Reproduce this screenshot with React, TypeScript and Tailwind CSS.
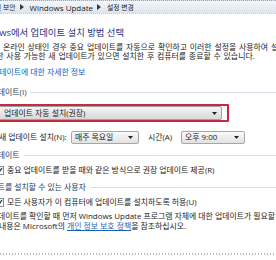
const Arrow = () => (
  <svg width="4" height="6" viewBox="0 0 4 6" className="ml-[4px] mr-[6px] shrink-0">
    <polygon points="0,0 4,3 0,6" fill="#3a3a3a" />
  </svg>
);

const Caret = () => (
  <svg width="5" height="3" viewBox="0 0 5 3" className="shrink-0">
    <polygon points="0,0 5,0 2.5,3" fill="#222" />
  </svg>
);

const Select = ({ label, className }: { label: string; className: string }) => (
  <div
    className={`h-[13px] border border-[#a7a7a7] rounded-[2px] bg-linear-to-b from-[#fafafa] to-[#e2e2e2] flex items-center justify-between pl-[3px] pr-[5px] ${className}`}
  >
    <span>{label}</span>
    <Caret />
  </div>
);

const GroupLabel = ({ text, shift }: { text: string; shift: string }) => (
  <div className="flex items-center h-[10px] text-[#1e395b]">
    <span className={`whitespace-nowrap ${shift}`}>{text}</span>
    <div className="flex-1 h-px bg-[#d6dee7] ml-[4px]" />
  </div>
);

const Check = () => (
  <div className="w-[9px] h-[9px] -ml-[5px] mr-[3px] shrink-0 border border-[#8f8f8f] bg-linear-to-b from-[#f2f2f2] to-[#ffffff] flex items-center justify-center">
    <svg width="7" height="7" viewBox="0 0 7 7">
      <path d="M1 3.6 L2.8 5.4 L6 1.2" stroke="#2a3f68" strokeWidth="1.3" fill="none" />
    </svg>
  </div>
);

export default function App() {
  return (
    <div className="w-[276px] h-[260px] overflow-hidden bg-white flex flex-col text-[7.9px] leading-[9px] text-[#222] font-['Open_Sans','Noto_Sans_CJK_KR',sans-serif]">
      <div className="h-[14px] shrink-0 border-t border-dotted border-t-[#98a4b2] border-b border-b-[#bcc7d3] bg-linear-to-b from-[#f4f7fa] to-[#dde4ec] flex items-center whitespace-nowrap text-[8px] text-[#1b1b1b]">
        <span className="-ml-[5px] text-[6.8px]">및 보안</span>
        <Arrow />
        <span>Windows Update</span>
        <Arrow />
        <span className="text-[6.8px]">설정 변경</span>
      </div>

      <div className="mt-[12px] whitespace-nowrap text-[9.4px] leading-[13px] text-[#1e3287] -ml-[29px]">
        Windows에서 업데이트 설치 방법 선택
      </div>

      <div className="mt-[4px] whitespace-nowrap [word-spacing:0.8px]">
        <div className="-ml-[29px]">컴퓨터가 온라인 상태인 경우 중요 업데이트를 자동으로 확인하고 이러한 설정을 사용하여 설치할 수 있습니다.</div>
        <div className="-ml-[11px]">또한 사용 가능한 새 업데이트가 있으면 설치한 후 컴퓨터를 종료할 수 있습니다.</div>
      </div>

      <div className="mt-[7px] whitespace-nowrap text-[#0066cc] -ml-[8px]">업데이트에 대한 자세한 정보</div>

      <div className="mt-[10px]">
        <GroupLabel text="중요 업데이트(I)" shift="-ml-[26px]" />
      </div>

      <div className="mt-[7px] -ml-[10px] w-[239px] h-[18px] shrink-0 border-2 border-[#c52a3e] rounded-[1px] flex items-center pr-[5px]">
        <div className="flex-1 h-[14px] border border-[#a2a2a2] rounded-[2px] bg-linear-to-b from-[#f4f4f4] to-[#d9d9d9] flex items-center justify-between pl-[11px] pr-[4px]">
          <span className="whitespace-nowrap">업데이트 자동 설치(권장)</span>
          <Caret />
        </div>
      </div>

      <div className="mt-[9px] flex items-center whitespace-nowrap">
        <span className="w-[71px] shrink-0 -ml-[1px]">새 업데이트 설치(N):</span>
        <Select label="매주 목요일" className="w-[68px] shrink-0 ml-[1px]" />
        <span className="ml-[9px] w-[33px] shrink-0">시간(A)</span>
        <Select label="오후 9:00" className="w-[64px] shrink-0" />
      </div>

      <div className="mt-[6px]">
        <GroupLabel text="권장 업데이트" shift="-ml-[26px]" />
      </div>

      <div className="mt-[6px] flex items-center whitespace-nowrap">
        <Check />
        <span>중요 업데이트를 받을 때와 같은 방식으로 권장 업데이트 제공(R)</span>
      </div>

      <div className="mt-[7px]">
        <GroupLabel text="업데이트를 설치할 수 있는 사용자" shift="-ml-[24px]" />
      </div>

      <div className="mt-[6px] flex items-center whitespace-nowrap">
        <Check />
        <span>모든 사용자가 이 컴퓨터에 업데이트를 설치하도록 허용(U)</span>
      </div>

      <div className="mt-[5px] whitespace-nowrap">
        <div className="-ml-[28px]">참고: 업데이트를 확인할 때 먼저 Windows Update 프로그램 자체에 대한 업데이트가 필요할 수 있습니다.</div>
        <div className="-ml-[1px] mt-[1px]">
          내용은 Microsoft의 <span className="text-[#1a5fb4] underline">개인 정보 보호 정책</span>을 참조하십시오.
        </div>
      </div>

      <svg width="276" height="2" className="mt-[22px] shrink-0 block">
        <line x1="0" y1="1" x2="276" y2="1" stroke="#707070" strokeWidth="1" strokeDasharray="1 2" />
      </svg>
    </div>
  );
}
